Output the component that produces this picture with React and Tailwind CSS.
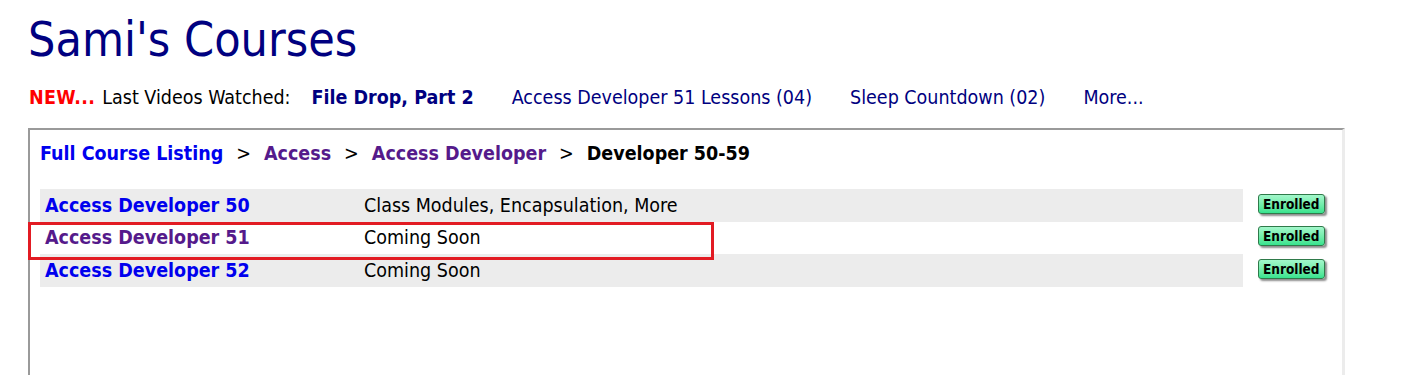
import React from 'react';

const recent = [
  { label: 'File Drop, Part 2', bold: true },
  { label: 'Access Developer 51 Lessons (04)' },
  { label: 'Sleep Countdown (02)' },
  { label: 'More...' },
];

const lessons = [
  { name: 'Access Developer 50', desc: 'Class Modules, Encapsulation, More', visited: false },
  { name: 'Access Developer 51', desc: 'Coming Soon', visited: true },
  { name: 'Access Developer 52', desc: 'Coming Soon', visited: false },
];

function Badge() {
  return (
    <span className="inline-block rounded-[3px] border border-[#2f7a4a] bg-gradient-to-b from-[#a2f7cb] to-[#34e38e] px-[4px] text-[13.5px] leading-[18px] font-bold text-black shadow-[2px_2px_2px_rgba(0,0,0,0.45)]">
      Enrolled
    </span>
  );
}

export default function App() {
  return (
    <div className="min-h-[375px] bg-white pl-[28px] font-['DejaVu_Sans_Condensed','DejaVu_Sans',sans-serif]">
      <h1 className="pt-[10px] text-[48px] leading-[58px] text-[#000080]">Sami's Courses</h1>

      <div className="mt-[16px] flex items-center text-[19.5px] leading-[28px]">
        <span className="ml-[1px] font-bold tracking-[0.3px] text-[#ff0000]">NEW...</span>
        <span className="ml-[7px] text-black">Last Videos Watched:</span>
        <div className="ml-[21px] flex gap-[38px]">
          {recent.map((r) => (
            <a key={r.label} className={`text-[#000080] ${r.bold ? 'font-bold' : ''}`}>{r.label}</a>
          ))}
        </div>
      </div>

      <div className="relative mt-[16px] h-[250px] w-[1317px] border-t-2 border-l-2 border-r-[3px] border-t-[#9a9a9a] border-l-[#9a9a9a] border-r-[#ececec] pl-[10px]">
        <div className="mt-[11px] flex items-center text-[19.5px] leading-[26px] font-bold">
          <a className="text-[#0000ee]">Full Course Listing</a>
          <span className="mx-[13px] font-normal">&gt;</span>
          <a className="text-[#551a8b]">Access</a>
          <span className="mx-[13px] font-normal">&gt;</span>
          <a className="text-[#551a8b]">Access Developer</a>
          <span className="mx-[13px] font-normal">&gt;</span>
          <span className="text-black">Developer 50-59</span>
        </div>

        <div className="mt-[22px] flex flex-col">
          {lessons.map((l, i) => (
            <div key={l.name} className="flex items-center">
              <div className={`flex h-[32.5px] w-[1203px] items-center text-[19.5px] ${i % 2 === 0 ? 'bg-[#ececec]' : 'bg-white'}`}>
                <a className={`w-[324px] pl-[5px] font-bold ${l.visited ? 'text-[#551a8b]' : 'text-[#0000ee]'}`}>{l.name}</a>
                <span className="text-black">{l.desc}</span>
              </div>
              <div className="-mt-[3px] ml-[15px]">
                <Badge />
              </div>
            </div>
          ))}
        </div>

        <div className="pointer-events-none absolute left-[-2px] top-[92px] h-[38px] w-[686px] border-[3px] border-[#e21b23]" />
      </div>
    </div>
  );
}
